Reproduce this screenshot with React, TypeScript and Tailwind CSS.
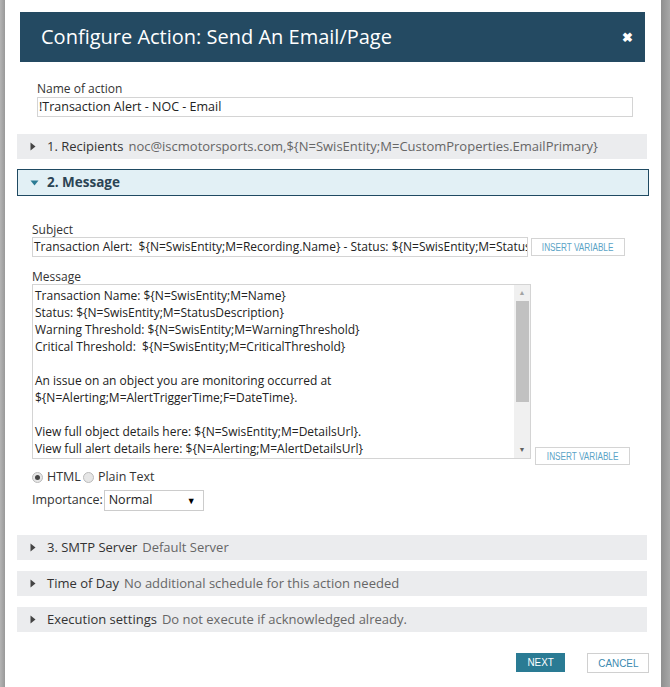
import React from 'react';

const Caret = ({ open = false }: { open?: boolean }) =>
  open ? (
    <svg width="9" height="6" viewBox="0 0 9 6" className="mr-[8px] shrink-0">
      <path d="M0.5 0.5h8L4.5 5.5z" fill="#2a7b94" />
    </svg>
  ) : (
    <svg width="6" height="9" viewBox="0 0 6 9" className="mr-[11px] shrink-0">
      <path d="M0.5 0.5v8L5.5 4.5z" fill="#444" />
    </svg>
  );

const SectionBar = ({ title, detail, top }: { title: string; detail: string; top: string }) => (
  <div className={`ml-[12px] w-[630px] h-[25px] ${top} bg-[#ebecee] flex items-center pl-[13px] text-[13px] whitespace-nowrap`}>
    <Caret />
    <span className="text-[#333]">{title}</span>
    <span className="ml-[5px] text-[#666]">{detail}</span>
  </div>
);

const InsertVariable = ({ className }: { className: string }) => (
  <button className={`${className} h-[18px] border border-[#d4d4d4] bg-white text-[10px] text-[#5aa3c6] uppercase flex items-center justify-center overflow-hidden font-['Liberation_Sans',sans-serif]`}>
    <span className="inline-block scale-x-[0.82] whitespace-nowrap">Insert Variable</span>
  </button>
);

const messageLines = [
  'Transaction Name: ${N=SwisEntity;M=Name}',
  'Status: ${N=SwisEntity;M=StatusDescription}',
  'Warning Threshold: ${N=SwisEntity;M=WarningThreshold}',
  'Critical Threshold:  ${N=SwisEntity;M=CriticalThreshold}',
  '',
  'An issue on an object you are monitoring occurred at',
  '${N=Alerting;M=AlertTriggerTime;F=DateTime}.',
  '',
  'View full object details here: ${N=SwisEntity;M=DetailsUrl}.',
  'View full alert details here: ${N=Alerting;M=AlertDetailsUrl}',
];

export default function App() {
  return (
    <div className="flex h-[687px] w-[670px] overflow-hidden font-['Open_Sans',sans-serif] text-[#333]">
      <div className="w-[5px] bg-gradient-to-r from-[#b4b4b4] to-[#999]" />

      <div className="flex-1 bg-white flex flex-col">
        {/* Header */}
        <div className="ml-[15px] mr-[16px] mt-[12px] h-[50px] bg-[#244a62] flex items-center justify-between pl-[21px] pr-[12px]">
          <h1 className="text-[20px] text-white">Configure Action: Send An Email/Page</h1>
          <span className="text-white text-[13px] font-bold leading-none">✖</span>
        </div>

        {/* Name */}
        <div className="ml-[32px] mt-[19px]">
          <div className="text-[12px] text-[#333] leading-[16px]">Name of action</div>
          <div className="w-[596px] h-[20px] border border-[#d4d4d4] flex items-center text-[12.5px] text-[#222] pl-[1px]">
            !Transaction Alert - NOC - Email
          </div>
        </div>

        <SectionBar top="mt-[17px]" title="1. Recipients" detail="noc@iscmotorsports.com,${N=SwisEntity;M=CustomProperties.EmailPrimary}" />

        {/* Message header */}
        <div className="ml-[12px] w-[632px] h-[27px] mt-[10px] bg-[#e2f0f5] border border-[#1f4a62] flex items-center pl-[12px]">
          <Caret open />
          <span className="text-[13.5px] font-bold text-[#2b4454]">2. Message</span>
        </div>

        {/* Message body */}
        <div className="ml-[27px] mt-[26px] flex flex-col">
          <div className="text-[12px] leading-[15px]">Subject</div>
          <div className="flex items-center">
            <div className="w-[496px] h-[20px] border border-[#d4d4d4] overflow-hidden whitespace-pre text-[12px] text-[#222] flex items-center pl-[1px]">
              {'Transaction Alert:  ${N=SwisEntity;M=Recording.Name} - Status: ${N=SwisEntity;M=Status}'}
            </div>
            <InsertVariable className="ml-[3px] w-[94px]" />
          </div>

          <div className="text-[12px] leading-[15px] mt-[12px]">Message</div>
          <div className="flex items-end">
            <div className="w-[499px] h-[175px] border border-[#d4d4d4] flex">
              <div className="flex-1 pl-[2px] pt-[2px] text-[12px] leading-[17px] text-[#222] whitespace-pre overflow-hidden">
                {messageLines.map((l, i) => (
                  <div key={i} className="h-[17px]">{l}</div>
                ))}
              </div>
              <div className="w-[16px] bg-[#f0f0f0] flex flex-col items-center">
                <span className="text-[7px] text-[#a3a3a3] leading-[16px] h-[16px]">▲</span>
                <div className="w-[13px] h-[101px] bg-[#c1c1c1]" />
                <div className="flex-1" />
                <span className="text-[7px] text-[#606060] leading-[16px] h-[16px]">▼</span>
              </div>
            </div>
            <InsertVariable className="ml-[4px] mb-[-6px] w-[95px]" />
          </div>

          <div className="flex items-center mt-[10px] text-[12.5px] h-[16px]">
            <span className="w-[11px] h-[11px] rounded-full border border-[#bbb] bg-[#e6e6e6] flex items-center justify-center">
              <span className="w-[5px] h-[5px] rounded-full bg-[#444]" />
            </span>
            <span className="ml-[4px]">HTML</span>
            <span className="ml-[2px] w-[11px] h-[11px] rounded-full border border-[#bbb] bg-[#e6e6e6]" />
            <span className="ml-[4px]">Plain Text</span>
          </div>

          <div className="flex items-center mt-[5px] text-[12.5px]">
            <span>Importance:</span>
            <div className="ml-[1px] w-[100px] h-[21px] border border-[#ccc] flex items-center justify-between pl-[4px] pr-[7px] text-[#222]">
              <span>Normal</span>
              <span className="text-[9px] text-black">▼</span>
            </div>
          </div>
        </div>

        <SectionBar top="mt-[24px]" title="3. SMTP Server" detail="Default Server" />
        <SectionBar top="mt-[11px]" title="Time of Day" detail="No additional schedule for this action needed" />
        <SectionBar top="mt-[11px]" title="Execution settings" detail="Do not execute if acknowledged already." />

        <div className="flex justify-end mr-[12px] mt-[21px] gap-[22px]">
          <button className="w-[49px] h-[19px] bg-[#2a7b94] text-white text-[11px] uppercase font-['Liberation_Sans',sans-serif]">
            <span className="inline-block scale-x-[0.9]">Next</span>
          </button>
          <button className="w-[62px] h-[20px] border border-[#d0d0d0] bg-white text-[#3b8ab0] text-[11px] uppercase font-['Liberation_Sans',sans-serif]">
            <span className="inline-block scale-x-[0.9]">Cancel</span>
          </button>
        </div>
      </div>

      <div className="w-[9px] bg-gradient-to-r from-[#8f8f8f] to-[#a8a8a8]" />
    </div>
  );
}
